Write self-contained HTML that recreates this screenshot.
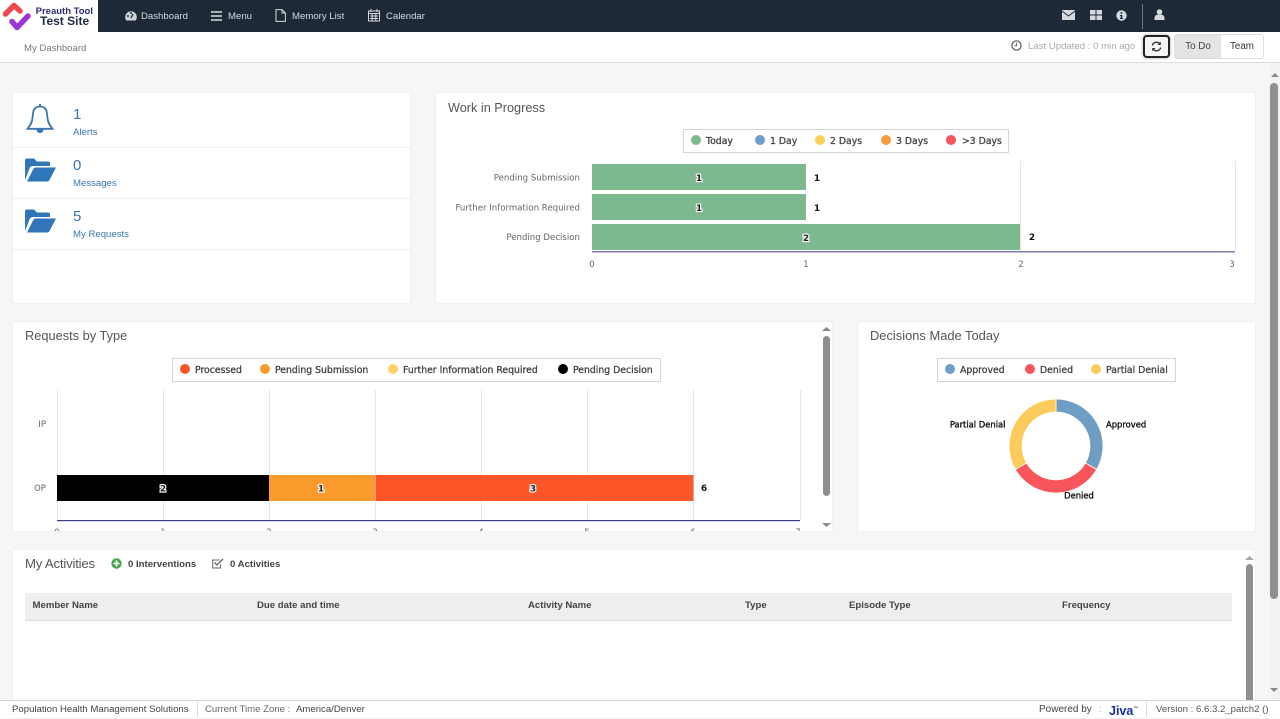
<!DOCTYPE html>
<html><head><meta charset="utf-8"><title>My Dashboard</title>
<style>
html,body{margin:0;padding:0;width:1280px;height:718px;overflow:hidden;background:#f6f6f6;font-family:"Liberation Sans",sans-serif;color:#444}
*{box-sizing:border-box}
.a{position:absolute;white-space:nowrap}
.panel{position:absolute;background:#fff;border:1px solid #f0f0f0;border-radius:3px;overflow:hidden}
svg{position:absolute;overflow:visible}
.nav{color:#d6dade;font-size:9.6px;top:10px;line-height:13px}
.h{color:#555;line-height:16px}
.blue{color:#3a76ae}
.num{font-size:15px;line-height:17px}
.lab{font-size:9.6px;line-height:12px}
.row{position:absolute;left:0;width:398px;height:1px;background:#eceff2}
.leg{position:absolute;border:1px solid #d5d5d5;background:#fff;height:24px}
.lt{position:absolute;top:4.500px;font-family:"DejaVu Sans",sans-serif;font-size:9.3px;line-height:13px;color:#444;white-space:nowrap;-webkit-text-stroke:.3px #444}
.d{position:absolute;top:5px;width:10px;height:10px;border-radius:50%}
.th{position:absolute;top:7px;font-size:9.6px;font-weight:bold;color:#444;line-height:12px;white-space:nowrap}
.tick{font-family:"DejaVu Sans",sans-serif;font-size:8.5px;fill:#666}
.cat{font-family:"DejaVu Sans",sans-serif;font-size:8.6px;fill:#666}
.val{font-family:"DejaVu Sans",sans-serif;font-size:9px;font-weight:bold;fill:#111}
.dl{font-family:"DejaVu Sans",sans-serif;font-size:8.4px;fill:#111;stroke:#111;stroke-width:.35px}
.in{font-family:"DejaVu Sans",sans-serif;font-size:9px;font-weight:bold;fill:#222;stroke:#fff;stroke-width:2.2px;paint-order:stroke}
.sb{position:absolute;background:#8f8f8f;border-radius:4px}
</style></head><body>

<!-- top bar -->
<div class="a" style="left:0;top:0;width:1280px;height:32px;background:#1e2937"></div>
<div class="a" style="left:0;top:0;width:98px;height:32px;background:#fff"></div>
<svg style="left:0;top:0" width="34" height="33" viewBox="0 0 34 33">
<path d="M5.500 14 L14 5.500 L20 11" fill="none" stroke="#f0484f" stroke-width="5.500" stroke-linecap="round" stroke-linejoin="round"/>
<path d="M12 21.500 L17 27.500 L28 16" fill="none" stroke="#9b35d6" stroke-width="5.500" stroke-linecap="round" stroke-linejoin="round"/>
</svg>
<div class="a" style="left:35px;top:6px;width:58px;text-align:right;font-size:9.5px;font-weight:bold;color:#2d2a6e;line-height:11px">Preauth Tool</div>
<div class="a" style="left:40px;top:14px;font-size:12px;font-weight:bold;color:#1f2a44;line-height:14px">Test Site</div>

<svg style="left:125px;top:10px" width="12" height="12" viewBox="0 0 12 12"><path d="M1.300 10.500 A5.800 5.800 0 1 1 10.700 10.500 Z" fill="#cfd3d8"/><path d="M6 8 L8 4" stroke="#1e2937" stroke-width="1.300"/><circle cx="3" cy="6" r="1" fill="#1e2937"/><circle cx="6" cy="3" r="1" fill="#1e2937"/></svg>
<div class="a nav" style="left:141px">Dashboard</div>
<svg style="left:211px;top:11px" width="11" height="10"><path d="M0 1H11M0 5H11M0 9H11" stroke="#d6dade" stroke-width="1.600"/></svg>
<div class="a nav" style="left:228px">Menu</div>
<svg style="left:275px;top:9px" width="11" height="13" viewBox="0 0 11 13"><path d="M1 .6H7L10.400 4V12.400H1ZM7 .6V4H10.400" fill="none" stroke="#d6dade"/></svg>
<div class="a nav" style="left:292px">Memory List</div>
<svg style="left:368px;top:9px" width="12" height="13" viewBox="0 0 12 13"><rect x=".5" y="2" width="11" height="10" fill="none" stroke="#d6dade"/><path d="M0 4.500H12M3 0V3M9 0V3M2 7H10M2 9.500H10M4.200 5V12M7.800 5V12" stroke="#d6dade"/></svg>
<div class="a nav" style="left:386px">Calendar</div>

<svg style="left:1062px;top:10px" width="13" height="10" viewBox="0 0 13 10"><rect width="13" height="10" fill="#d6dade"/><path d="M0 1 L6.500 6 L13 1" fill="none" stroke="#1e2937"/></svg>
<svg style="left:1090px;top:10px" width="12" height="10" viewBox="0 0 12 10"><path d="M0 0H5.500V4.500H0ZM6.500 0H12V4.500H6.500ZM0 5.500H5.500V10H0ZM6.500 5.500H12V10H6.500Z" fill="#d6dade"/></svg>
<svg style="left:1116px;top:10px" width="11" height="11" viewBox="0 0 11 11"><circle cx="5.500" cy="5.500" r="5.200" fill="#d6dade"/><path d="M4.500 2.200H6.300V3.800H4.500ZM4 5H6.300V8H7V9H4V8H4.700V6H4Z" fill="#1e2937"/></svg>
<div class="a" style="left:1142px;top:4px;width:1px;height:25px;background:#6e7782"></div>
<svg style="left:1154px;top:9px" width="11" height="11" viewBox="0 0 11 11"><circle cx="5.500" cy="3" r="2.800" fill="#d6dade"/><path d="M0.500 11 V8.500 Q1 6 3.500 5.600 H7.500 Q10 6 10.500 8.500 V11Z" fill="#d6dade"/></svg>

<!-- sub bar -->
<div class="a" style="left:0;top:32px;width:1280px;height:31px;background:#fff;border-bottom:1px solid #ddd"></div>
<div class="a" style="left:24px;top:43px;font-size:9.6px;line-height:12px;color:#777">My Dashboard</div>
<svg style="left:1011px;top:40px" width="11" height="11" viewBox="0 0 11 11"><circle cx="5.500" cy="5.500" r="4.600" fill="none" stroke="#666" stroke-width="1.300"/><path d="M5.500 2.800V5.800H3.300" fill="none" stroke="#666"/></svg>
<div class="a" style="left:1028px;top:41px;font-size:9.6px;line-height:12px;color:#aaa">Last Updated : 0 min ago</div>
<div class="a" style="left:1143px;top:35px;width:27px;height:23px;background:#f4f4f4;border:2px solid #222;border-radius:4px;box-shadow:0 0 2px 1px #ccc"></div>
<svg style="left:1151px;top:41px" width="11" height="11" viewBox="0 0 11 11"><path d="M1.300 4.500A4.300 4.300 0 0 1 9 3M9.700 6.500A4.300 4.300 0 0 1 2 8" fill="none" stroke="#333" stroke-width="1.400"/><path d="M9.800 .6V4H6.400ZM1.200 10.400V7H4.600Z" fill="#333"/></svg>
<div class="a" style="left:1174px;top:34px;width:90px;height:25px;border:1px solid #ddd;border-radius:3px;background:#fff"></div>
<div class="a" style="left:1175px;top:35px;width:46px;height:23px;background:#e4e4e4;font-size:9.8px;line-height:24px;text-align:center;color:#444">To Do</div>
<div class="a" style="left:1221px;top:35px;width:42px;height:23px;font-size:9.8px;line-height:24px;text-align:center;color:#333">Team</div>

<!-- main scrollbar -->
<div class="a" style="left:1270px;top:63px;width:10px;height:638px;background:#f3f3f3"></div>
<svg style="left:1271px;top:72px" width="8" height="6"><path d="M0 5L4 1L8 5Z" fill="#8a8a8a"/></svg>
<div class="sb" style="left:1270px;top:83px;width:8px;height:516px"></div>
<svg style="left:1270px;top:687px" width="8" height="6"><path d="M0 1L4 5L8 1Z" fill="#8a8a8a"/></svg>

<!-- alerts panel -->
<div class="panel" style="left:12px;top:92px;width:399px;height:212px">
  <div class="row" style="top:54px"></div>
  <div class="row" style="top:105px"></div>
  <div class="row" style="top:156px"></div>
  <svg style="left:13px;top:11px" width="28" height="31" viewBox="0 0 28 31"><path d="M14 2.500 C7.500 2.500 7 7.500 6.500 14 C6.200 19 3.500 22 1.500 24.800 H26.500 C24.500 22 21.800 19 21.500 14 C21 7.500 20.500 2.500 14 2.500Z" fill="none" stroke="#3a76ae" stroke-width="1.800"/><path d="M14 0V3" stroke="#3a76ae" stroke-width="2"/><path d="M10.500 25.500A3.500 3.500 0 0 0 17.500 25.500Z" fill="#3a76ae"/></svg>
  <div class="a num blue" style="left:60px;top:13px">1</div>
  <div class="a lab blue" style="left:60px;top:33.500px">Alerts</div>
  <svg style="left:12px;top:65px" width="31" height="24" viewBox="0 0 31 24"><path d="M0 22V2.500Q0 .5 2 .5H9L12 3.500H23Q25 3.500 25 5.500V8H8Q5.500 8 4.500 10.500Z" fill="#2f77b8"/><path d="M2 23.500L8.500 10.500Q9 9.500 10.500 9.500H31L24.500 22Q23.700 23.500 22 23.500Z" fill="#2f77b8"/></svg>
  <div class="a num blue" style="left:60px;top:64px">0</div>
  <div class="a lab blue" style="left:60px;top:84.500px">Messages</div>
  <svg style="left:12px;top:116px" width="31" height="24" viewBox="0 0 31 24"><path d="M0 22V2.500Q0 .5 2 .5H9L12 3.500H23Q25 3.500 25 5.500V8H8Q5.500 8 4.500 10.500Z" fill="#2f77b8"/><path d="M2 23.500L8.500 10.500Q9 9.500 10.500 9.500H31L24.500 22Q23.700 23.500 22 23.500Z" fill="#2f77b8"/></svg>
  <div class="a num blue" style="left:60px;top:115px">5</div>
  <div class="a lab blue" style="left:60px;top:135.500px">My Requests</div>
</div>

<!-- WIP -->
<div class="panel" style="left:435px;top:92px;width:821px;height:212px">
  <div class="a h" style="left:12px;top:6.500px;font-size:12.700px">Work in Progress</div>
  <div class="leg" style="left:247px;top:36px;width:326px">
    <span class="d" style="left:7px;background:#7db88f"></span><span class="lt" style="left:22px">Today</span>
    <span class="d" style="left:71px;background:#6f9dc4"></span><span class="lt" style="left:86px">1 Day</span>
    <span class="d" style="left:131px;background:#fdcf57"></span><span class="lt" style="left:146px">2 Days</span>
    <span class="d" style="left:197px;background:#f99a3d"></span><span class="lt" style="left:212px">3 Days</span>
    <span class="d" style="left:262px;background:#f9555a"></span><span class="lt" style="left:278px">&gt;3 Days</span>
  </div>
  <svg style="left:-436px;top:-93px" width="1280" height="320">
    <path d="M1020.500 161V251M1235.500 161V251" stroke="#e6e6e6"/>
    <rect x="592" y="164" width="214" height="26" fill="#7db88f"/>
    <rect x="592" y="194" width="214" height="26" fill="#7db88f"/>
    <rect x="592" y="224" width="428" height="26" fill="#7db88f"/>
    <rect x="592" y="251" width="643" height="1.500" fill="#7e7eb4"/>
    <text class="cat" x="580" y="180.500" text-anchor="end">Pending Submission</text>
    <text class="cat" x="580" y="210.500" text-anchor="end">Further Information Required</text>
    <text class="cat" x="580" y="240" text-anchor="end">Pending Decision</text>
    <text class="in" x="699" y="181" text-anchor="middle">1</text>
    <text class="in" x="699" y="211" text-anchor="middle">1</text>
    <text class="in" x="806" y="241" text-anchor="middle">2</text>
    <text class="val" x="817" y="181" text-anchor="middle">1</text>
    <text class="val" x="817" y="211" text-anchor="middle">1</text>
    <text class="val" x="1032" y="240" text-anchor="middle">2</text>
    <text class="tick" x="592" y="267" text-anchor="middle">0</text>
    <text class="tick" x="806" y="267" text-anchor="middle">1</text>
    <text class="tick" x="1021" y="267" text-anchor="middle">2</text>
    <text class="tick" x="1232" y="267" text-anchor="middle">3</text>
  </svg>
</div>

<!-- Requests -->
<div class="panel" style="left:12px;top:321px;width:821px;height:211px">
  <div class="a h" style="left:12px;top:6px;font-size:12.800px">Requests by Type</div>
  <div class="leg" style="left:159px;top:36px;width:489px">
    <span class="d" style="left:7px;background:#fc5629"></span><span class="lt" style="left:22px">Processed</span>
    <span class="d" style="left:87px;background:#fb9a2d"></span><span class="lt" style="left:102px">Pending Submission</span>
    <span class="d" style="left:215px;background:#fdd264"></span><span class="lt" style="left:230px">Further Information Required</span>
    <span class="d" style="left:385px;background:#000"></span><span class="lt" style="left:400px">Pending Decision</span>
  </div>
  <svg style="left:-13px;top:-322px" width="1280" height="540">
    <path d="M57.500 390V520M163.500 390V520M269.500 390V520M375.500 390V520M481.500 390V520M587.500 390V520M693.500 390V520M800.500 390V520" stroke="#e6e6e6"/>
    <rect x="57" y="475" width="212" height="26" fill="#000"/>
    <rect x="269" y="475" width="106" height="26" fill="#fb9a2d"/>
    <rect x="375.500" y="475" width="318" height="26" fill="#fc5629"/>
    <rect x="57" y="520" width="743" height="1.200" fill="#3a3a8c"/>
    <text class="cat" x="46" y="427" text-anchor="end">IP</text>
    <text class="cat" x="46" y="491" text-anchor="end">OP</text>
    <text class="in" x="163" y="491.500" text-anchor="middle">2</text>
    <text class="in" x="321" y="491.500" text-anchor="middle">1</text>
    <text class="in" x="533" y="491.500" text-anchor="middle">3</text>
    <text class="val" x="704" y="491" text-anchor="middle">6</text>
    <text class="tick" x="57" y="535" text-anchor="middle">0</text>
    <text class="tick" x="163" y="535" text-anchor="middle">1</text>
    <text class="tick" x="269" y="535" text-anchor="middle">2</text>
    <text class="tick" x="375" y="535" text-anchor="middle">3</text>
    <text class="tick" x="481" y="535" text-anchor="middle">4</text>
    <text class="tick" x="587" y="535" text-anchor="middle">5</text>
    <text class="tick" x="693" y="535" text-anchor="middle">6</text>
    <text class="tick" x="798" y="535" text-anchor="middle">7</text>
  </svg>
  <svg style="left:809px;top:4px" width="9" height="6"><path d="M0 5L4.500 1L9 5Z" fill="#888"/></svg>
  <div class="sb" style="left:810px;top:14px;width:7px;height:160px"></div>
  <svg style="left:809px;top:200px" width="9" height="6"><path d="M0 1L4.500 5L9 1Z" fill="#888"/></svg>
</div>

<!-- Decisions -->
<div class="panel" style="left:857px;top:321px;width:399px;height:211px">
  <div class="a h" style="left:12px;top:6px;font-size:12.900px">Decisions Made Today</div>
  <div class="leg" style="left:79px;top:36px;width:239px">
    <span class="d" style="left:7px;background:#6f9dc4"></span><span class="lt" style="left:22px">Approved</span>
    <span class="d" style="left:87px;background:#f9555a"></span><span class="lt" style="left:102px">Denied</span>
    <span class="d" style="left:153px;background:#fdcb5b"></span><span class="lt" style="left:168px">Partial Denial</span>
  </div>
  <svg style="left:-858px;top:-322px" width="1280" height="540">
    <path d="M1056 399A47 47 0 0 1 1096.700 469.500L1085.400 463A34 34 0 0 0 1056 412Z" fill="#6f9dc4" stroke="#fff" stroke-width=".8"/>
    <path d="M1096.700 469.500A47 47 0 0 1 1015.300 469.500L1026.600 463A34 34 0 0 0 1085.400 463Z" fill="#f9555a" stroke="#fff" stroke-width=".8"/>
    <path d="M1015.300 469.500A47 47 0 0 1 1056 399V412A34 34 0 0 0 1026.600 463Z" fill="#fdcb5b" stroke="#fff" stroke-width=".8"/>
    <text class="dl" x="1106" y="427.500">Approved</text>
    <text class="dl" x="1079" y="498.500" text-anchor="middle">Denied</text>
    <text class="dl" x="1005.500" y="427.500" text-anchor="end">Partial Denial</text>
  </svg>
</div>

<!-- Activities -->
<div class="panel" style="left:12px;top:549px;width:1244px;height:170px">
  <div class="a h" style="left:12px;top:6px;font-size:13.200px;letter-spacing:-.2px">My Activities</div>
  <svg style="left:98px;top:8px" width="11" height="11" viewBox="0 0 11 11"><circle cx="5.500" cy="5.500" r="5.200" fill="#46a34a"/><path d="M5.500 2.500V8.500M2.500 5.500H8.500" stroke="#fff" stroke-width="1.800"/></svg>
  <div class="a" style="left:115px;top:8.500px;font-size:9.6px;font-weight:bold;line-height:12px;color:#444">0 Interventions</div>
  <svg style="left:199px;top:8px" width="12" height="11" viewBox="0 0 12 11"><path d="M8.500 6.500V10H.7V2H7.500" fill="none" stroke="#666"/><path d="M2.500 4.500L5 7L11 1" fill="none" stroke="#666" stroke-width="1.300"/></svg>
  <div class="a" style="left:217px;top:8.500px;font-size:9.6px;font-weight:bold;line-height:12px;color:#444">0 Activities</div>
  <div class="a" style="left:12px;top:43px;width:1207px;height:28px;background:#eee;border-bottom:1px solid #ddd">
    <span class="th" style="left:7.500px">Member Name</span>
    <span class="th" style="left:232px">Due date and time</span>
    <span class="th" style="left:503px">Activity Name</span>
    <span class="th" style="left:720px">Type</span>
    <span class="th" style="left:824px">Episode Type</span>
    <span class="th" style="left:1037px">Frequency</span>
  </div>
  <svg style="left:1232px;top:5px" width="9" height="6"><path d="M0 5L4.500 1L9 5Z" fill="#aaa"/></svg>
  <div class="sb" style="left:1233px;top:14px;width:7px;height:150px"></div>
</div>

<!-- footer -->
<div class="a" style="left:0;top:700px;width:1280px;height:18px;background:#fff;border-top:1px solid #d5d5d5"></div>
<div class="a" style="left:12px;top:704px;font-size:9.6px;line-height:12px;color:#444">Population Health Management Solutions</div>
<div class="a" style="left:197px;top:702px;width:1px;height:15px;background:#ddd"></div>
<div class="a" style="left:205px;top:704px;font-size:9.6px;line-height:12px;color:#666">Current Time Zone :</div>
<div class="a" style="left:296px;top:704px;font-size:9.6px;line-height:12px;color:#444">America/Denver</div>
<div class="a" style="left:1039px;top:704px;font-size:10px;line-height:12px;color:#444">Powered by</div>
<div class="a" style="left:1099px;top:704px;font-size:10px;line-height:12px;color:#aaa">:</div>
<div class="a" style="left:1109px;top:702px;font-size:12.500px;font-weight:bold;line-height:14px;color:#17309a">Jiva<span style="font-size:5px;vertical-align:5px;color:#555">™</span></div>
<div class="a" style="left:1146px;top:702px;width:1px;height:15px;background:#ddd"></div>
<div class="a" style="left:1156px;top:704px;font-size:9.6px;line-height:12px;color:#555">Version : 6.6.3.2_patch2 ()</div>
</body></html>
